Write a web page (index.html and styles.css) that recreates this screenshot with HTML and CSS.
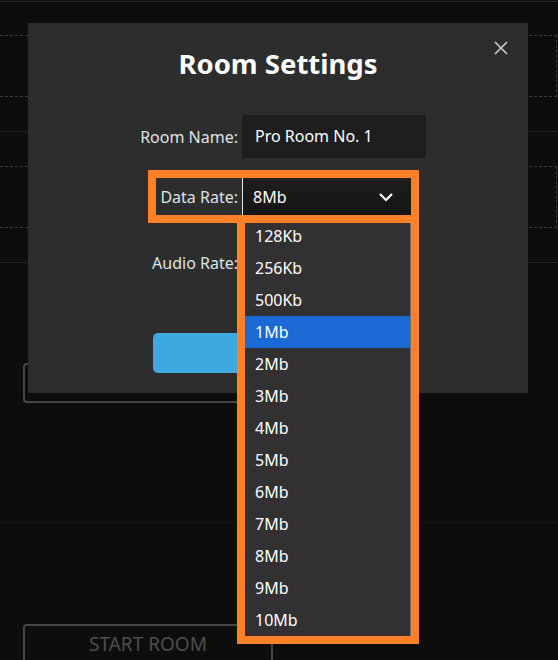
FILE: index.html
```html
<!doctype html>
<html lang="en">
  <head>
    <meta charset="UTF-8" />
    <meta name="viewport" content="width=device-width, initial-scale=1.0" />
    <title>Room Settings</title>
    <link rel="stylesheet" href="styles.css">
  </head>
  <body>
    <div class="page">
      <div class="topline"></div>
      <section class="slot slot-a"><div class="dash-box"></div></section>
      <section class="slot slot-b"><div class="dash-box"></div></section>
      <section class="slot slot-c"><div class="ghost-btn"></div></section>
      <section class="slot slot-d"><button class="ghost-btn">START ROOM</button></section>
    </div>

    <div class="modal">
      <button class="close" aria-label="Close">
        <svg width="14" height="14" viewBox="0 0 14 14">
          <path d="M1 1 L13 13 M13 1 L1 13" stroke="#cfcfcf" stroke-width="1.6" fill="none" />
        </svg>
      </button>
      <h1>Room Settings</h1>

      <div class="form">
        <div class="row">
          <label>Room Name:</label>
          <div class="field text-field">Pro Room No. 1</div>
        </div>

        <div class="row marked">
          <label>Data Rate:</label>
          <div class="field select">
            <span>8Mb</span>
            <svg width="16" height="10" viewBox="0 0 16 10">
              <path d="M2 2 L8 8 L14 2" stroke="#fff" stroke-width="2.2" fill="none" />
            </svg>
          </div>
          <div class="menu">
            <ul>
              <li>128Kb</li>
              <li>256Kb</li>
              <li>500Kb</li>
              <li class="active">1Mb</li>
              <li>2Mb</li>
              <li>3Mb</li>
              <li>4Mb</li>
              <li>5Mb</li>
              <li>6Mb</li>
              <li>7Mb</li>
              <li>8Mb</li>
              <li>9Mb</li>
              <li>10Mb</li>
            </ul>
          </div>
        </div>

        <div class="row audio">
          <label>Audio Rate:</label>
          <div class="field select"></div>
        </div>
      </div>

      <button class="save" aria-label="Save"></button>
    </div>
  </body>
</html>
```

FILE: styles.css
```css
body {
  font-family: "Noto Sans", "Open Sans", sans-serif;
  background-color: #0d0d0d;
  margin: 0;
  padding: 0;
  overflow: hidden;
  height: 660px;
}
.page {
  position: relative;
}
.topline {
  height: 1px;
  margin-top: 1px;
  background-color: #242424;
}
.slot {
  box-sizing: border-box;
  border-bottom: 1px solid #1f1f1f;
}
.slot-a {
  height: 130px;
  padding-top: 33px;
}
.slot-b {
  height: 131px;
  padding-top: 34px;
}
.slot-c {
  height: 260px;
  padding-top: 100px;
  border-bottom-color: #171717;
}
.slot-d {
  padding-top: 101px;
  border-bottom: none;
}
.dash-box {
  box-sizing: border-box;
  width: 557px;
  height: 62px;
  border: 1px dashed #3a3a3a;
  border-left: none;
}
.ghost-btn {
  display: block;
  box-sizing: border-box;
  width: 250px;
  height: 40px;
  margin-left: 23px;
  border: 2px solid #474747;
  border-radius: 4px;
  background: transparent;
  color: #4e4e4e;
  font-family: inherit;
  font-size: 19px;
  padding: 0;
}

.modal {
  position: absolute;
  top: 23px;
  left: 28px;
  width: 500px;
  height: 370px;
  box-sizing: border-box;
  padding-top: 22px;
  background-color: #2d2d2d;
}
.modal h1 {
  margin: 0;
  color: #fff;
  font-size: 27.5px;
  line-height: 38px;
  font-weight: 700;
  text-align: center;
}
.close {
  position: absolute;
  top: 18px;
  right: 20px;
  width: 14px;
  height: 14px;
  padding: 0;
  border: none;
  background: none;
  line-height: 0;
}
.form {
  margin-top: 32px;
}
.row {
  position: relative;
  display: flex;
  align-items: center;
  margin-left: 104px;
  width: fit-content;
  font-size: 16px;
}
.row label {
  width: 110px;
  box-sizing: border-box;
  padding-right: 4px;
  text-align: right;
  color: #dfe3e6;
  white-space: nowrap;
}
.field {
  box-sizing: border-box;
  color: #fff;
}
.text-field {
  width: 184px;
  height: 43px;
  line-height: 43px;
  padding-left: 13px;
  background-color: #1e1e1e;
}
.select {
  display: flex;
  align-items: center;
  justify-content: space-between;
  width: 169px;
  height: 37px;
  padding: 0 17px 0 10px;
  border-left: 1px solid #e6e6e6;
  background: linear-gradient(#1e1e1e, #141414);
}
.marked {
  margin-top: 20px;
}
.marked::after {
  content: "";
  position: absolute;
  left: 16px;
  top: -8px;
  width: 271px;
  height: 53px;
  box-sizing: border-box;
  border: 8px solid #ff8026;
  z-index: 2;
  pointer-events: none;
}
.menu {
  position: absolute;
  left: 105px;
  top: 37px;
  width: 182px;
  box-sizing: border-box;
  border: 8px solid #ff8026;
  border-top-width: 5px;
  z-index: 1;
}
.menu ul {
  list-style: none;
  margin: 0;
  padding: 0;
  background-color: #323032;
  border-right: 1px solid #6e6e6e;
}
.menu li {
  height: 32px;
  line-height: 32px;
  padding-left: 10px;
  color: #fff;
}
.menu li.active {
  background-color: #1a69d4;
}
.audio {
  margin-top: 29px;
}
.save {
  display: block;
  margin: 52px 0 0 125px;
  width: 250px;
  height: 40px;
  border: none;
  border-radius: 5px;
  background-color: #3fa8de;
}
```
